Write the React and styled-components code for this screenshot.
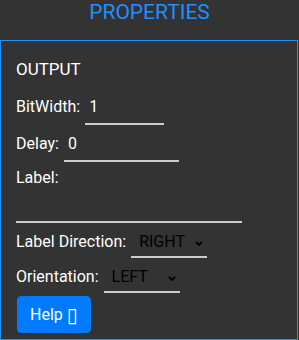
import React from "react";
import styled, { createGlobalStyle } from "styled-components";

const Global = createGlobalStyle`
  html, body { margin: 0; padding: 0; background: #333333; }
  body { font-family: Roboto, "Liberation Sans", sans-serif; width: 299px; height: 340px; overflow: hidden; }
  * { box-sizing: border-box; }
`;

const Title = styled.div`
  height: 40px;
  text-align: center;
  font-size: 21px;
  line-height: 25px;
  color: #1e90ff;
`;

const Panel = styled.div`
  width: 298px;
  border: 1px solid #1e90ff;
  padding: 18px 15px 6px;
  color: #ffffff;
  font-size: 16px;
  line-height: 20px;
`;

const Heading = styled.div`
  font-size: 17px;
  line-height: 20px;
  margin-bottom: 11px;
`;

const Row = styled.div`
  display: flex;
  align-items: baseline;
  gap: 5px;
  margin-top: ${(p) => p.$mt || 0}px;
`;

const Label = styled.label`
  display: block;
  line-height: 20px;
  white-space: nowrap;
  margin-top: ${(p) => p.$mt || 0}px;
`;

const TextInput = styled.input`
  width: ${(p) => p.$w}px;
  height: 35px;
  padding: 6px 4px 7px;
  border: none;
  border-bottom: 2px solid #cccccc;
  background: transparent;
  color: #ffffff;
  font-family: Roboto, "Liberation Sans", sans-serif;
  font-size: 16px;
  line-height: 20px;
  outline: none;
  display: block;
`;

const SelectWrap = styled.div`
  display: flex;
  align-items: center;
  width: ${(p) => p.$w}px;
  height: 28px;
  border-bottom: 2px solid #cccccc;
`;

const Select = styled.select`
  appearance: none;
  -webkit-appearance: none;
  flex: 1;
  min-width: 0;
  height: 26px;
  border: none;
  background: transparent;
  color: #000000;
  font-family: Roboto, "Liberation Sans", sans-serif;
  font-size: 16px;
  line-height: 20px;
  padding: 2px 0 4px 8px;
  outline: none;
`;

const Chevron = styled.svg`
  width: 8px;
  height: 5px;
  margin-right: 4px;
  flex: none;
`;

const Button = styled.button`
  display: flex;
  align-items: center;
  gap: 4px;
  height: 37px;
  margin: 3px 0 0 1px;
  padding: 0 12px;
  border: 1px solid #007bff;
  border-radius: 4px;
  background: #007bff;
  color: #ffffff;
  font-family: Roboto, "Liberation Sans", sans-serif;
  font-size: 16px;
  line-height: 23px;
`;

const Glyph = styled.span`
  font-family: "DejaVu Sans", sans-serif;
  font-size: 20px;
  line-height: 23px;
  margin-top: 1px;
`;

function Dropdown({ width, value, options }) {
  return (
    <SelectWrap $w={width}>
      <Select defaultValue={value}>
        {options.map((o) => (
          <option key={o}>{o}</option>
        ))}
      </Select>
      <Chevron viewBox="0 0 8 5">
        <path d="M0.9 0.9 L4 4 L7.1 0.9" fill="none" stroke="#000" strokeWidth="1.8" />
      </Chevron>
    </SelectWrap>
  );
}

export default function App() {
  const dirs = ["RIGHT", "DOWN", "LEFT", "UP"];
  return (
    <>
      <Global />
      <Title>PROPERTIES</Title>
      <Panel>
        <Heading>OUTPUT</Heading>
        <Row>
          <Label>BitWidth:</Label>
          <TextInput $w={79} defaultValue="1" />
        </Row>
        <Row $mt={2}>
          <Label>Delay:</Label>
          <TextInput $w={115} defaultValue="0" />
        </Row>
        <Label $mt={6}>Label:</Label>
        <TextInput $w={226} defaultValue="" />
        <Row $mt={7}>
          <Label>Label Direction:</Label>
          <Dropdown width={76} value="RIGHT" options={dirs} />
        </Row>
        <Row $mt={7}>
          <Label>Orientation:</Label>
          <Dropdown width={76} value="LEFT" options={dirs} />
        </Row>
        <Button>
          Help<Glyph>{"\u25AF"}</Glyph>
        </Button>
      </Panel>
    </>
  );
}
